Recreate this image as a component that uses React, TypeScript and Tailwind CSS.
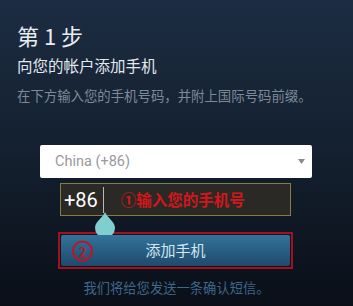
export default function App() {
  const cjk = { fontFamily: '"Noto Sans CJK SC", "Noto Sans", sans-serif' };

  return (
    <div
      className="w-[353px] h-[306px] overflow-hidden bg-gradient-to-b from-[#1c2c42] via-[#14202f] to-[#0a0f18] text-white"
      style={cjk}
    >
      {/* Heading block */}
      <div className="px-[17px] pt-[20px]">
        <h1 className="text-[22px] leading-[30px] text-[#e8edf2]">第 1 步</h1>
        <h2 className="mt-[4px] text-[15.5px] leading-[22px] text-[#e3e8ee]">向您的帐户添加手机</h2>
        <p className="mt-[10px] text-[13.4px] leading-[18px] text-[#7d8a99] whitespace-nowrap">
          在下方输入您的手机号码，并附上国际号码前缀。
        </p>
      </div>

      {/* Country select */}
      <div className="mt-[41px] ml-[40px] w-[272px] h-[33px] bg-white rounded-[2px] flex items-center justify-between pl-[15px] pr-[7px]">
        <span className="text-[14.5px] text-[#9a9a9a]" style={{ fontFamily: 'Roboto, "Noto Sans", sans-serif' }}>
          China (+86)
        </span>
        <svg width="7" height="5" viewBox="0 0 7 5">
          <path d="M0 0 L7 0 L3.5 5 Z" fill="#8a8a8a" />
        </svg>
      </div>

      {/* Phone input */}
      <div className="relative mt-[5px] ml-[60px] w-[231px] h-[33px] bg-[#2b2926] border border-[#8a7a44] flex items-center">
        <span
          className="pl-[3px] text-[20px] text-white leading-none"
          style={{ fontFamily: 'Roboto, "Noto Sans", sans-serif' }}
        >
          +86
        </span>
        <span className="ml-[5px] w-px h-[26px] bg-[#b8b8b8]" />
        <span className="ml-[17px] text-[15.5px] font-bold text-[#d4161a] whitespace-nowrap">①输入您的手机号</span>

        {/* cursor handle */}
        <svg className="absolute left-[33px] top-[28px]" width="22" height="26" viewBox="0 0 22 26">
          <path d="M11 0 C13 6 21 9 21 16 A10 10 0 0 1 1 16 C1 9 9 6 11 0 Z" fill="#7fcfcf" />
        </svg>
      </div>

      {/* Add phone button */}
      <div className="mt-[16px] ml-[58px] w-[235px] h-[37px] border-2 border-[#a3101e] p-[1px] flex">
        <button className="relative flex-1 rounded-[2px] bg-gradient-to-b from-[#33739a] to-[#1f4a6d] flex items-center justify-center">
          <span className="absolute left-[11px] top-1/2 -translate-y-1/2 w-[21px] h-[21px] rounded-full border-2 border-[#c01424] flex items-center justify-center text-[13px] font-bold text-[#c01424] leading-none">
            2
          </span>
          <span className="text-[15px] text-[#d2e6f0]">添加手机</span>
        </button>
      </div>

      <p className="mt-[9px] text-center text-[13.3px] text-[#3d6888]">我们将给您发送一条确认短信。</p>
    </div>
  );
}
